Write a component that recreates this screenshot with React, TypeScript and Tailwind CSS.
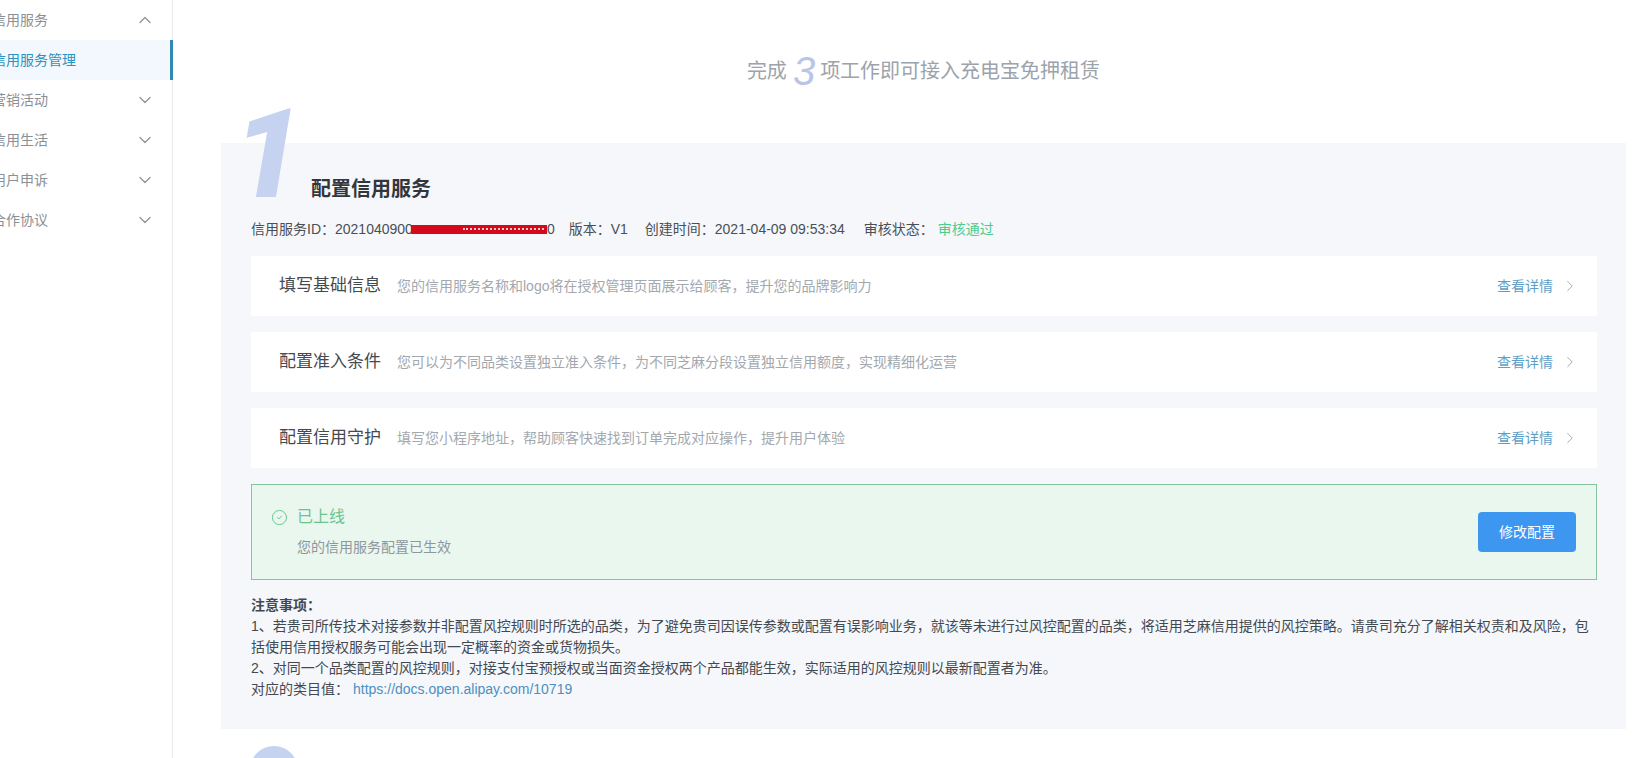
import { ChevronDown, ChevronRight, ChevronUp, CircleCheck } from 'lucide-react';

const font = 'font-["Liberation_Sans","Noto_Sans_CJK_SC",sans-serif]';

const menu = [
	{ label: '信用服务', open: true },
	{ label: '信用服务管理', active: true },
	{ label: '营销活动' },
	{ label: '信用生活' },
	{ label: '用户申诉' },
	{ label: '合作协议' }
];

const steps = [
	{ title: '填写基础信息', desc: '您的信用服务名称和logo将在授权管理页面展示给顾客，提升您的品牌影响力' },
	{ title: '配置准入条件', desc: '您可以为不同品类设置独立准入条件，为不同芝麻分段设置独立信用额度，实现精细化运营' },
	{ title: '配置信用守护', desc: '填写您小程序地址，帮助顾客快速找到订单完成对应操作，提升用户体验' }
];

const Sidebar = () => (
	<aside className="w-[173px] shrink-0 border-r border-[#e8eaed] bg-white">
		{menu.map((item) => (
			<div
				key={item.label}
				className={
					item.active
						? 'flex h-10 items-center border-r-[3px] border-[#2f8ab5] bg-[#f2f8fd] text-[#2b93bd] -mr-px'
						: 'flex h-10 items-center justify-between pr-[17px] text-[#8b9096]'
				}
			>
				<span className="-ml-2 text-sm">{item.label}</span>
				{!item.active &&
					(item.open ? (
						<ChevronUp size={20} strokeWidth={1.5} className="text-[#8f949a]" />
					) : (
						<ChevronDown size={20} strokeWidth={1.5} className="text-[#8f949a]" />
					))}
			</div>
		))}
	</aside>
);

const StepRow = ({ title, desc }: { title: string; desc: string }) => (
	<div className="flex h-[60px] items-center bg-white pl-7 pr-[18px]">
		<span className="text-[17px] text-[#444a50]">{title}</span>
		<span className="ml-4 text-sm text-[#a3a8ae]">{desc}</span>
		<span className="ml-auto text-sm text-[#5d9fc6]">查看详情</span>
		<ChevronRight size={18} strokeWidth={1.3} className="ml-2 text-[#9fa7b0]" />
	</div>
);

export default function App() {
	return (
		<div className={`flex h-[758px] overflow-hidden bg-white ${font}`}>
			<Sidebar />
			<main className="flex min-w-0 flex-1 flex-col pl-12 pr-[18px] pt-[51px]">
				<h1 className="flex h-10 items-center justify-center text-xl font-normal text-[#9ca3ab]">
					完成
					<span className="ml-[6px] mr-[5px] text-[40px] font-normal italic text-[#b9c5e6]">3</span>
					项工作即可接入充电宝免押租赁
				</h1>

				<section className="relative mt-[52px] shrink-0 bg-[#f5f7fb] pb-[29px] pl-[30px] pr-[29px] pt-[33px]">
					<span className='absolute left-[12px] top-[-38px] font-["Roboto",sans-serif] text-[124px] font-black italic leading-[100px] text-[#c5d3f0]'>
						1
					</span>
					<h2 className="relative ml-[60px] text-xl font-bold leading-[26px] text-[#33373c]">配置信用服务</h2>

					<div className="relative mt-[17px] flex h-5 items-center text-sm text-[#4a4f55]">
						<span className="flex items-center">
							信用服务ID：2021040900
							<span className="-ml-[2px] flex h-[9px] w-[136px] items-center justify-end bg-[#d5091c] pr-[3px]">
								<span className="w-[81px] border-t-2 border-dotted border-[#f6c6cb]" />
							</span>
							0
						</span>
						<span className="ml-[14px]">版本：V1</span>
						<span className="ml-[17px]">创建时间：2021-04-09 09:53:34</span>
						<span className="ml-[19px]">审核状态：</span>
						<span className="ml-1 text-[#4fcb8c]">审核通过</span>
					</div>

					<div className="mt-[17px] flex flex-col gap-4">
						{steps.map((s) => (
							<StepRow key={s.title} title={s.title} desc={s.desc} />
						))}
					</div>

					<div className="mt-4 flex h-24 items-center justify-between border border-[#85c49d] bg-[#e9f7ef] pl-5 pr-5">
						<div className="self-start pt-5">
							<div className="flex h-6 items-center gap-[9px] text-base text-[#6cc48e]">
								<CircleCheck size={17} strokeWidth={1.4} className="-ml-px" />
								已上线
							</div>
							<div className="ml-[25px] mt-2 text-sm leading-5 text-[#8f969d]">您的信用服务配置已生效</div>
						</div>
						<button className="h-10 w-[98px] rounded bg-[#3d97f0] text-sm text-white">修改配置</button>
					</div>

					<div className="mt-[15px] text-sm leading-[21px] text-[#44494f]">
						<div className="font-bold">注意事项：</div>
						<p>
							1、若贵司所传技术对接参数并非配置风控规则时所选的品类，为了避免贵司因误传参数或配置有误影响业务，就该等未进行过风控配置的品类，将适用芝麻信用提供的风控策略。请贵司充分了解相关权责和及风险，包括使用信用授权服务可能会出现一定概率的资金或货物损失。
						</p>
						<p>2、对同一个品类配置的风控规则，对接支付宝预授权或当面资金授权两个产品都能生效，实际适用的风控规则以最新配置者为准。</p>
						<p>
							对应的类目值：
							<a className="ml-1 text-[#4d8fc0]" href="#">
								https://docs.open.alipay.com/10719
							</a>
						</p>
					</div>
				</section>

				<div className="ml-[29px] mt-[17px] size-12 shrink-0 rounded-full bg-[#c5d3f0]" />
			</main>
		</div>
	);
}
